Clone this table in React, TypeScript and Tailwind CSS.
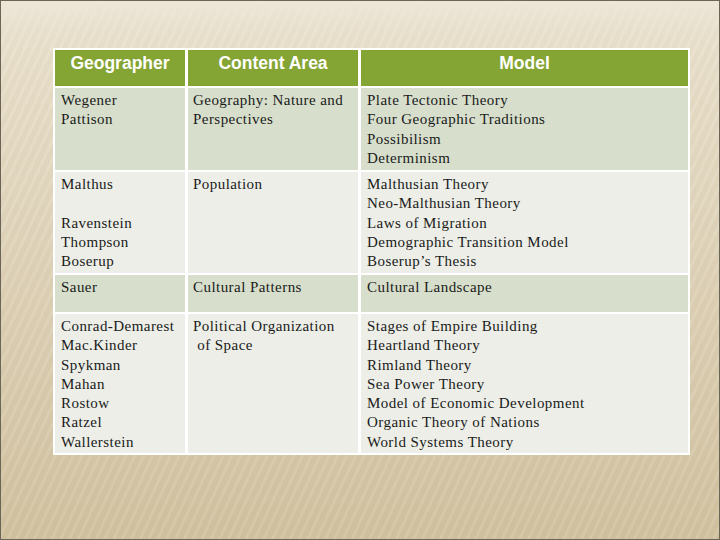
import React from "react";

const rows: { h: string; bg: string; c1: string[]; c2: string[]; c3: string[] }[] = [
  {
    h: "h-[82px]",
    bg: "bg-[#d7dfcc]",
    c1: ["Wegener", "Pattison"],
    c2: ["Geography: Nature and", "Perspectives"],
    c3: ["Plate Tectonic Theory", "Four Geographic Traditions", "Possibilism", "Determinism"],
  },
  {
    h: "h-[101px]",
    bg: "bg-[#eceee7]",
    c1: ["Malthus", "\u00a0", "Ravenstein", "Thompson", "Boserup"],
    c2: ["Population"],
    c3: [
      "Malthusian Theory",
      "Neo-Malthusian Theory",
      "Laws of Migration",
      "Demographic Transition Model",
      "Boserup\u2019s Thesis",
    ],
  },
  {
    h: "h-[37px]",
    bg: "bg-[#d7dfcc]",
    c1: ["Sauer"],
    c2: ["Cultural Patterns"],
    c3: ["Cultural Landscape"],
  },
  {
    h: "h-[139px]",
    bg: "bg-[#eceee7]",
    c1: ["Conrad-Demarest", "Mac.Kinder", "Spykman", "Mahan", "Rostow", "Ratzel", "Wallerstein"],
    c2: ["Political Organization", " of Space"],
    c3: [
      "Stages of Empire Building",
      "Heartland Theory",
      "Rimland Theory",
      "Sea Power Theory",
      "Model of Economic Development",
      "Organic Theory of Nations",
      "World Systems Theory",
    ],
  },
];

function Cell({ lines, bg, h, pl }: { lines: string[]; bg: string; h: string; pl: string }) {
  return (
    <div className={`${bg} ${h} ${pl} pt-[3px] font-['Liberation_Serif',serif] text-[15px] leading-[19.3px] tracking-[0.45px] text-[#1a1a1a] whitespace-pre`}>
      {lines.map((l, i) => (
        <div key={i}>{l}</div>
      ))}
    </div>
  );
}

export default function App() {
  return (
    <div className="relative w-[720px] h-[540px] overflow-hidden border border-[#6a6554] bg-[linear-gradient(to_bottom,#ece4d3_0%,#e8dec9_12%,#ddd0b5_55%,#d1c2a0_100%)]">
      <div className="absolute inset-0 bg-[repeating-linear-gradient(115deg,rgba(255,255,255,0.07)_0px,rgba(255,255,255,0.07)_3px,rgba(0,0,0,0.015)_3px,rgba(0,0,0,0.015)_8px)]" />
      <div className="absolute inset-x-0 top-0 h-[34px] bg-[linear-gradient(to_bottom,#ede5d5,rgba(236,228,211,0))]" />
      <div className="relative pt-[47px] pl-[52px]">
        <div className="w-[637px] bg-white p-[2px] grid grid-cols-[130px_170px_327px] gap-x-[3px] gap-y-[2px]">
          <div className="h-[36px] bg-[#84a433] text-center pt-[2px] font-['Liberation_Sans',Arial,sans-serif] font-bold text-[17.5px] leading-[22px] text-white">
            Geographer
          </div>
          <div className="h-[36px] bg-[#84a433] text-center pt-[2px] font-['Liberation_Sans',Arial,sans-serif] font-bold text-[17.5px] leading-[22px] text-white">
            Content Area
          </div>
          <div className="h-[36px] bg-[#84a433] text-center pt-[2px] font-['Liberation_Sans',Arial,sans-serif] font-bold text-[17.5px] leading-[22px] text-white">
            Model
          </div>
          {rows.map((r, i) => (
            <React.Fragment key={i}>
              <Cell lines={r.c1} bg={r.bg} h={r.h} pl="pl-[6px]" />
              <Cell lines={r.c2} bg={r.bg} h={r.h} pl="pl-[5px]" />
              <Cell lines={r.c3} bg={r.bg} h={r.h} pl="pl-[6px]" />
            </React.Fragment>
          ))}
        </div>
      </div>
    </div>
  );
}
